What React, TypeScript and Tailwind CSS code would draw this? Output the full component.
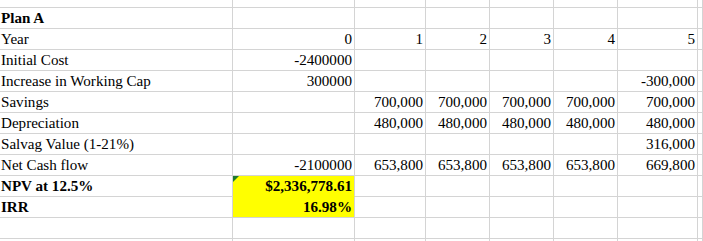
import React from "react";

type Cell = { t?: string; bold?: boolean; yellow?: boolean; mark?: boolean; left?: boolean; mergeDown?: boolean };

const E: Cell = {};
const rows: Cell[][] = [
  [{ t: "Plan A", bold: true, left: true }, E, E, E, E, E, E],
  [{ t: "Year", left: true }, { t: "0" }, { t: "1" }, { t: "2" }, { t: "3" }, { t: "4" }, { t: "5" }],
  [{ t: "Initial Cost", left: true }, { t: "-2400000" }, E, E, E, E, E],
  [{ t: "Increase in Working Cap", left: true }, { t: "300000" }, E, E, E, E, { t: "-300,000" }],
  [{ t: "Savings", left: true }, E, { t: "700,000" }, { t: "700,000" }, { t: "700,000" }, { t: "700,000" }, { t: "700,000" }],
  [{ t: "Depreciation", left: true }, E, { t: "480,000" }, { t: "480,000" }, { t: "480,000" }, { t: "480,000" }, { t: "480,000" }],
  [{ t: "Salvag Value (1-21%)", left: true }, E, E, E, E, E, { t: "316,000" }],
  [{ t: "Net Cash flow", left: true }, { t: "-2100000" }, { t: "653,800" }, { t: "653,800" }, { t: "653,800" }, { t: "653,800" }, { t: "669,800" }],
  [{ t: "NPV at 12.5%", bold: true, left: true }, { t: "$2,336,778.61", bold: true, yellow: true, mark: true, mergeDown: true }, E, E, E, E, E],
  [{ t: "IRR", bold: true, left: true }, { t: "16.98%", bold: true, yellow: true }, E, E, E, E, E],
  [E, E, E, E, E, E, E],
  [E, E, E, E, E, E, E],
];

export default function App() {
  return (
    <div className="w-[703px] h-[241px] overflow-hidden bg-white text-black text-[15.1px] font-['Liberation_Serif','Times_New_Roman',serif]">
      <div className="grid grid-cols-[233px_122px_71px_64px_64px_64px_80px_1fr]">
        {[0, 1, 2, 3, 4, 5, 6, 7].map((c) => (
          <div key={`h${c}`} className="h-[8px] border-r border-b border-[#d4d4d4]" />
        ))}
        {rows.map((row, r) =>
          [...row, E].map((cell, c) => (
            <div
              key={`${r}-${c}`}
              className={`relative h-[21px] border-r border-b flex items-end pb-[1px] leading-[17px] whitespace-nowrap ${
                cell.left ? "justify-start pl-[1px]" : "justify-end pr-[2px]"
              } ${cell.yellow ? "bg-[#ffff00]" : "bg-white"} ${
                cell.mergeDown ? "border-b-[#ffff00] border-r-[#d4d4d4]" : "border-[#d4d4d4]"
              } ${cell.bold ? "font-bold" : "font-normal"}`}
            >
              {cell.mark && (
                <span className="absolute left-0 top-0 w-0 h-0 border-t-[6px] border-r-[6px] border-t-[#1f7a2e] border-r-transparent" />
              )}
              {cell.t}
            </div>
          ))
        )}
      </div>
    </div>
  );
}
